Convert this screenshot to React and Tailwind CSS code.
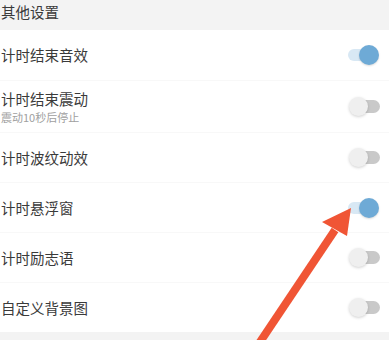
const rows = [
  { title: '计时结束音效', on: true },
  { title: '计时结束震动', sub: '震动10秒后停止', on: false, h: 'h-[52px]' },
  { title: '计时波纹动效', on: false },
  { title: '计时悬浮窗', on: true },
  { title: '计时励志语', on: false },
  { title: '自定义背景图', on: false },
];

function Toggle({ on }) {
  if (on) {
    return (
      <div className="relative w-[36px] h-[22px] flex items-center">
        <div className="w-[26px] h-[12px] rounded-full bg-[#d8e8f4]" />
        <div className="absolute right-[5px] w-[20px] h-[20px] rounded-full bg-[#6eaad6] shadow-[0_1px_2px_rgba(0,0,0,0.15)]" />
      </div>
    );
  }
  return (
    <div className="relative w-[36px] h-[22px] flex items-center">
      <div className="ml-[10px] w-[22px] h-[13px] rounded-full bg-[#c9c9c9]" />
      <div className="absolute left-[1px] w-[19px] h-[19px] rounded-full bg-[#efefef] shadow-[0_1px_3px_rgba(0,0,0,0.18)]" />
    </div>
  );
}

export default function App() {
  return (
    <div
      className="relative w-[389px] h-[340px] overflow-hidden bg-white"
      style={{ fontFamily: '"Noto Sans CJK SC", "Noto Sans", sans-serif' }}
    >
      <div className="h-[30px] bg-[#f3f3f3] pl-[1px] text-[14.5px] leading-[24px] text-[#3a3a3a]">
        其他设置
      </div>

      {rows.map((r, i) => (
        <div
          key={i}
          className={`flex items-center justify-between pl-[1px] pr-[5px] ${r.h || 'h-[50px]'} ${i > 0 ? 'border-t border-[#f8f8f8]' : ''}`}
        >
          <div className="flex flex-col">
            <span className="text-[14.5px] leading-[20px] text-[#3a3a3a]">{r.title}</span>
            {r.sub && (
              <span className="text-[11px] leading-[16px] text-[#a0a0a0]">{r.sub}</span>
            )}
          </div>
          <Toggle on={r.on} />
        </div>
      ))}

      <div className="h-[10px] bg-[#f3f3f3]" />

      <svg
        className="absolute left-0 top-0 pointer-events-none"
        width="389"
        height="340"
        viewBox="0 0 389 340"
      >
        <line x1="258" y1="345" x2="335" y2="230" stroke="#f05535" strokeWidth="8" />
        <polygon points="351,208 322,222 347,236" fill="#f05535" />
      </svg>
    </div>
  );
}
